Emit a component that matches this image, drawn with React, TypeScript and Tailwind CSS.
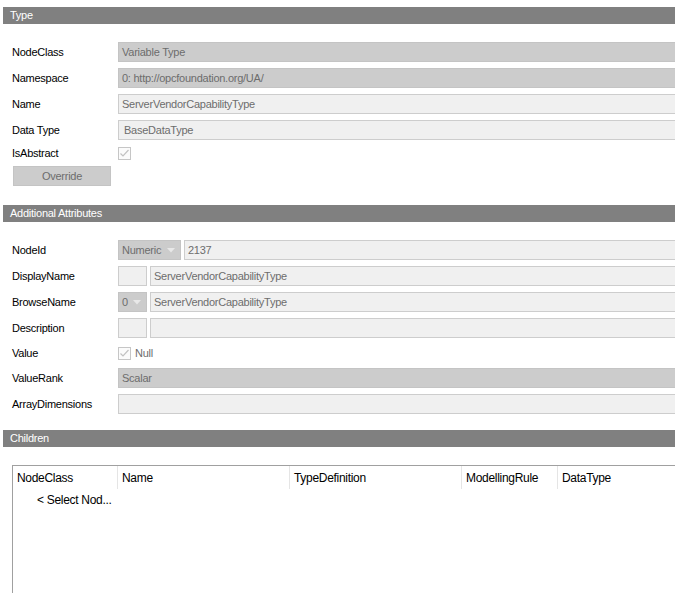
import { ReactNode } from "react"

const font = { fontFamily: '"Liberation Sans", Arial, sans-serif' }

function SectionBar({ title }: { title: string }) {
  return (
    <div className="ml-[3px] h-[17px] bg-[#808080] pl-[7px] text-[11px] leading-[17px] tracking-[-0.25px] text-white">
      {title}
    </div>
  )
}

function Row({ label, children, h = "h-[20px]" }: { label: string; children: ReactNode; h?: string }) {
  return (
    <div className={`flex items-center ${h}`}>
      <div className="w-[106px] shrink-0 text-[11px] tracking-[-0.25px] text-black">{label}</div>
      <div className="-mr-[4px] flex h-full flex-1 items-center gap-[3px]">{children}</div>
    </div>
  )
}

function GrayBox({ text, className = "flex-1" }: { text?: string; className?: string }) {
  return (
    <div className={`flex h-full items-center border border-[#c4c4c4] bg-[#cccccc] pl-[3px] text-[11px] tracking-[-0.25px] text-[#6d6d6d] ${className}`}>
      {text}
    </div>
  )
}

function LightBox({ text, className = "flex-1", pad = "pl-[3px]" }: { text?: string; className?: string; pad?: string }) {
  return (
    <div className={`flex h-full items-center border border-[#cdcdcd] bg-[#f0f0f0] ${pad} text-[11px] tracking-[-0.25px] text-[#6d6d6d] ${className}`}>
      {text}
    </div>
  )
}

function Combo({ text, className }: { text: string; className: string }) {
  return (
    <div className={`flex h-full items-center justify-between border border-[#c4c4c4] bg-[#cccccc] pl-[3px] pr-[5px] text-[11px] tracking-[-0.25px] text-[#6d6d6d] ${className}`}>
      <span>{text}</span>
      <svg width="8" height="5" viewBox="0 0 8 5">
        <path d="M0 0 L8 0 L4 4.5 Z" fill="#e8e8e8" />
      </svg>
    </div>
  )
}

function Check() {
  return (
    <div className="flex h-[13px] w-[13px] items-center justify-center border border-[#c6c6c6] bg-[#fbfbfb]">
      <svg width="11" height="11" viewBox="0 0 11 11">
        <path d="M1.5 5.5 L4 8 L9.5 2" fill="none" stroke="#c2c2c2" strokeWidth="1.2" />
      </svg>
    </div>
  )
}

export default function App() {
  const cols = [
    { name: "NodeClass", w: "w-[104px]", first: true },
    { name: "Name", w: "w-[172px]" },
    { name: "TypeDefinition", w: "w-[172px]" },
    { name: "ModellingRule", w: "w-[96px]" },
    { name: "DataType", w: "flex-1" },
  ]

  return (
    <div className="h-[593px] w-[675px] overflow-hidden bg-white pt-[7px]" style={font}>
      <SectionBar title="Type" />
      <div className="flex flex-col gap-[6px] pl-[12px] pt-[18px]">
        <Row label="NodeClass"><GrayBox text="Variable Type" /></Row>
        <Row label="Namespace"><GrayBox text="0: http://opcfoundation.org/UA/" /></Row>
        <Row label="Name"><LightBox text="ServerVendorCapabilityType" /></Row>
        <Row label="Data Type"><LightBox text="BaseDataType" pad="pl-[5px]" /></Row>
        <Row label="IsAbstract" h="h-[14px]"><Check /></Row>
        <button className="ml-[1px] h-[20px] w-[98px] border border-[#c4c4c4] bg-[#cccccc] text-[11px] tracking-[-0.25px] text-[#6d6d6d]">
          Override
        </button>
      </div>

      <div className="mt-[19px]">
        <SectionBar title="Additional Attributes" />
      </div>
      <div className="flex flex-col gap-[6px] pl-[12px] pt-[18px]">
        <Row label="NodeId">
          <Combo text="Numeric" className="w-[63px]" />
          <LightBox text="2137" />
        </Row>
        <Row label="DisplayName">
          <LightBox className="w-[29px]" />
          <LightBox text="ServerVendorCapabilityType" />
        </Row>
        <Row label="BrowseName">
          <Combo text="0" className="w-[29px]" />
          <LightBox text="ServerVendorCapabilityType" />
        </Row>
        <Row label="Description">
          <LightBox className="w-[29px]" />
          <LightBox />
        </Row>
        <Row label="Value" h="h-[18px]">
          <Check />
          <span className="ml-[1px] text-[11px] tracking-[-0.25px] text-[#6d6d6d]">Null</span>
        </Row>
        <Row label="ValueRank"><GrayBox text="Scalar" /></Row>
        <Row label="ArrayDimensions"><LightBox /></Row>
      </div>

      <div className="mt-[16px]">
        <SectionBar title="Children" />
      </div>
      <div className="ml-[12px] mt-[18px] h-[200px] border-l border-t border-[#a0a0a0] bg-white">
        <div className="flex h-[23px] items-center">
          {cols.map((c) => (
            <div
              key={c.name}
              className={`flex h-full shrink-0 items-center ${c.w} ${c.first ? "pl-[4px]" : "border-l border-[#e5e5e5] pl-[4px]"} text-[12px] tracking-[-0.3px] text-black`}
            >
              {c.name}
            </div>
          ))}
        </div>
        <div className="flex h-[22px] items-center pl-[24px] text-[12px] tracking-[-0.3px] text-black">
          &lt; Select Nod...
        </div>
      </div>
    </div>
  )
}
